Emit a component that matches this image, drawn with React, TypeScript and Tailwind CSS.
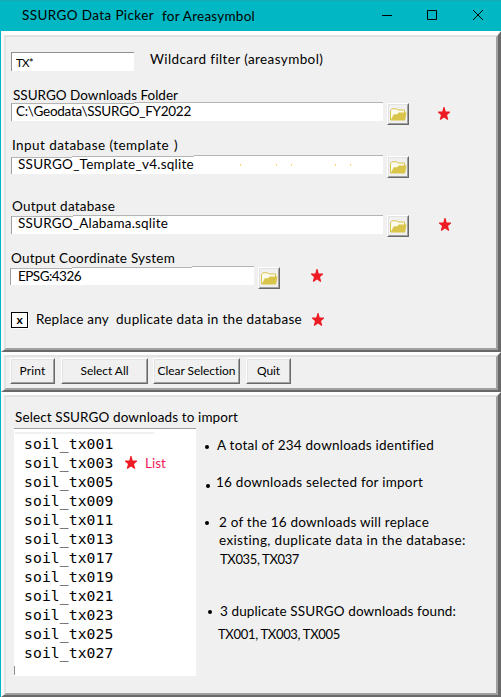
import { useLayoutEffect, useRef, useState } from "react";
import type { ReactNode } from "react";
import clsx from "clsx";

/** One line of label text, tracked so that it fills the given width. */
function Label({ children, width, className }: { children: string; width: number; className?: string }) {
  const ref = useRef<HTMLSpanElement>(null);
  const [spacing, setSpacing] = useState(0);
  useLayoutEffect(() => {
    if (!ref.current) return;
    const natural = ref.current.getBoundingClientRect().width;
    setSpacing((width - natural) / children.length);
  }, []);
  return (
    <div className={clsx("h-5 leading-5 whitespace-pre", className)}>
      <span ref={ref} style={{ letterSpacing: spacing }}>
        {children}
      </span>
    </div>
  );
}

function Star({ className }: { className?: string }) {
  return (
    <svg viewBox="0 0 12 13" className={clsx("h-[13px] w-3 shrink-0", className)} fill="#ed1c24">
      <path d="M5.5 0h1l1.2 4.6H12v1L9 8l1.2 4.2-.6.8L6 10.6 2.4 13l-.6-.8L3 8 0 5.6v-1h4.3z" />
    </svg>
  );
}

function FolderButton({ className }: { className?: string }) {
  return (
    <button
      className={clsx(
        "flex size-[22px] shrink-0 border border-t-white border-r-[#696969] border-b-[#696969] border-l-white",
        className,
      )}
    >
      <span className="flex size-5 items-start border border-t-[#e3e3e3] border-r-[#a0a0a0] border-b-[#a0a0a0] border-l-[#e3e3e3] pt-[3px] pl-px">
        <svg viewBox="0 0 17 13" className="h-[13px] w-[17px] shrink-0">
          <path d="M.5 12V2.5L2 .8h4.5L8 2h6.5v3" fill="#fdfbf0" stroke="#d9c54a" />
          <path d="M.5 12.5 3.8 6.3h3.4L8.6 4.6h7.9L15 12.5z" fill="#d9c54a" />
        </svg>
      </span>
    </button>
  );
}

function Field({ segments, children }: { segments: string[]; children: ReactNode }) {
  return (
    <div className="relative flex h-[19px] shrink-0">
      {segments.map((s, i) => (
        <div key={i} className={clsx("border-t border-[#b4b4b4] bg-white", i === 0 && "border-l border-l-[#a0a0a0]", s)} />
      ))}
      {children}
    </div>
  );
}

function Panel({ children, className }: { children: ReactNode; className: string }) {
  return (
    <section
      className={clsx(
        "shrink-0 border-r-[3px] border-b-2 border-l-[3px] border-t-white border-r-[#696969] border-b-[#696969] border-l-[#f8f8f8]",
        className,
      )}
    >
      <div className="h-full border-2 border-t-[#e3e3e3] border-r-[#a0a0a0] border-b-[#a0a0a0] border-l-[#e3e3e3] bg-[#f0f0f0]">
        {children}
      </div>
    </section>
  );
}

function PushButton({ label, text, className }: { label: string; text: number; className: string }) {
  return (
    <button
      className={clsx(
        "h-[26px] border border-t-white border-r-[#696969] border-b-[#696969] border-l-white text-[12px]",
        className,
      )}
    >
      <span className="flex h-6 justify-center border border-t-[#e3e3e3] border-r-[#a0a0a0] border-b-[#a0a0a0] border-l-[#e3e3e3] pt-px">
        <Label width={text}>{label}</Label>
      </span>
    </button>
  );
}

function Dot({ className }: { className: string }) {
  return <span className={clsx("size-1 shrink-0 rounded-full bg-black", className)} />;
}

const soils = ["001", "003", "005", "009", "011", "013", "017", "019", "021", "023", "025", "027"];

export default function App() {
  return (
    <main className="flex h-[697px] w-[501px] flex-col overflow-hidden bg-[#f0f0f0] font-['Lato',sans-serif] text-[13.5px] text-black">
      <header className="flex h-[31px] shrink-0 items-start border-t border-[#14a9b4] bg-[#00b7c3] pl-[22px]">
        <Label width={132} className="mt-1 w-[140px]">SSURGO Data Picker</Label>
        <Label width={93} className="mt-[5px] w-[220px]">for Areasymbol</Label>
        <svg viewBox="0 0 102 11" className="mt-2 h-[11px] w-[102px]" fill="none" stroke="#000">
          <path d="M0 6.5h10M45.5 1.5h9v9h-9zM91 1l10 10M101 1 91 11" />
        </svg>
      </header>

      <div className="flex grow flex-col border-l border-[#00b7c3]">
        <Panel className="h-[321px] border-t-4">
          <div className="flex h-12 items-start pt-3 pl-[5px]">
            <div className="mt-[3px] h-[19px] w-[123px] border-t border-l border-[#909090] bg-white pl-1 text-[11.5px]">
              <Label width={17}>TX*</Label>
            </div>
            <Label width={173} className="ml-4">Wildcard filter (areasymbol)</Label>
          </div>

          <Label width={165} className="ml-[7px]">SSURGO Downloads Folder</Label>
          <div className="-mt-[3px] flex h-[33px] items-start pl-[5px]">
            <Field segments={["mt-px w-[123px]", "w-[249px]"]}>
              <Label width={175} className="absolute top-[-1px] left-[5px]">C:\Geodata\SSURGO_FY2022</Label>
            </Field>
            <FolderButton className="mt-px ml-1" />
            <Star className="mt-[5px] ml-[29px]" />
          </div>

          <div className="flex pl-[6px]">
            <Label width={157} className="w-[162px]">Input database (template</Label>
            <Label width={4}>)</Label>
          </div>
          <div className="flex h-[41px] items-start pl-[5px]">
            <Field segments={["mt-0.5 w-[61px]", "mt-px w-[122px]", "w-[189px]"]}>
              <Label width={176} className="absolute top-[-1px] left-[7px]">SSURGO_Template_v4.sqlite</Label>
              <span className="absolute top-[9px] left-[229px] h-0.5 w-px bg-[#ffd280]" />
              <span className="absolute top-[9px] left-[265px] h-0.5 w-px bg-[#ffd280]" />
              <span className="absolute top-[9px] left-[280px] h-0.5 w-px bg-[#ffd280]" />
              <span className="absolute top-[9px] left-[324px] h-0.5 w-px bg-[#ffd280]" />
              <span className="absolute top-[9px] left-[339px] h-0.5 w-px bg-[#ffd280]" />
            </Field>
            <FolderButton className="mt-px ml-1" />
          </div>

          <Label width={103} className="ml-[6px]">Output database</Label>
          <div className="-mt-px flex h-[33px] items-start pl-[5px]">
            <Field segments={["mt-px w-[62px]", "w-[310px]"]}>
              <Label width={150} className="absolute top-[-2px] left-[7px]">SSURGO_Alabama.sqlite</Label>
            </Field>
            <FolderButton className="ml-1" />
            <Star className="mt-[3px] ml-[30px]" />
          </div>

          <Label width={164} className="ml-[5px]">Output Coordinate System</Label>
          <div className="-mt-0.5 flex h-[43px] items-start pl-1">
            <Field segments={["mt-0.5 w-[62px]", "mt-px w-[120px]", "w-[62px]"]}>
              <Label width={63} className="absolute top-0 left-[8px]">EPSG:4326</Label>
            </Field>
            <FolderButton className="mt-px ml-1" />
            <Star className="mt-[3px] ml-[31px]" />
          </div>

          <div className="flex items-start pl-[5px]">
            <div className="mt-[3px] flex h-4 w-[17px] justify-center border border-black bg-white text-[12px] font-bold shadow-[1px_1px_0_#fff]">
              <Label width={6} className="-mt-[3px]">x</Label>
            </div>
            <Label width={73} className="ml-2 w-20">Replace any</Label>
            <Label width={186}>duplicate data in the database</Label>
            <Star className="mt-1 ml-[10px]" />
          </div>
        </Panel>

        <Panel className="h-10 border-t-[3px]">
          <div className="flex pt-px pl-1">
            <PushButton label="Print" text={26} className="w-[45px]" />
            <PushButton label="Select All" text={48} className="ml-[6px] w-[87px]" />
            <PushButton label="Clear Selection" text={78} className="ml-[5px] w-[87px]" />
            <PushButton label="Quit" text={23} className="ml-[6px] w-[45px]" />
          </div>
        </Panel>

        <Panel className="h-[305px] border-t-[3px]">
          <Label width={223} className="mt-[10px] ml-[9px]">Select SSURGO downloads to import</Label>
          <div className="mt-px flex items-start pl-2">
            <div className="h-[248px] w-[182px] border-t border-[#a0a0a0] bg-white">
              <div className="mt-[3px] ml-px h-0.5 w-[139px] bg-[#f0f0f0]" />
              <ul className="pl-[10px] font-['DejaVu_Sans_Mono',monospace] text-[14.7px]">
                {soils.map((n) => (
                  <li key={n} className="flex h-[19px] items-start leading-[19px]">
                    <span className="w-[101px] tracking-[0.1px]">soil_tx{n}</span>
                    {n === "003" && (
                      <>
                        <Star className="mt-[3px]" />
                        <span className="ml-2 font-['Lato',sans-serif] text-[13.5px] text-[#ed1c5c]">
                          <Label width={21}>List</Label>
                        </span>
                      </>
                    )}
                  </li>
                ))}
              </ul>
              <div className="mt-1 h-[9px] w-px bg-[#909090]" />
            </div>

            <div className="flex flex-col pt-[7px]">
              <div className="flex h-[37px] items-start">
                <Dot className="mt-[10px] ml-[9px]" />
                <Label width={217} className="ml-2">A total of 234 downloads identified</Label>
              </div>
              <div className="flex h-10 items-start">
                <Dot className="mt-3 ml-[10px]" />
                <Label width={207} className="ml-[6px]">16 downloads selected for import</Label>
              </div>
              <div className="flex h-[18px] items-start">
                <Dot className="mt-[9px] ml-[9px]" />
                <Label width={210} className="ml-[10px]">2 of the 16 downloads will replace</Label>
              </div>
              <Label width={247} className="-mb-px ml-[23px]">existing, duplicate data in the database:</Label>
              <Label width={79} className="ml-[24px] text-[13px]">TX035, TX037</Label>
              <div className="mt-8 flex h-[23px] items-start">
                <Dot className="mt-[9px] ml-3" />
                <Label width={236} className="ml-2">3 duplicate SSURGO downloads found:</Label>
              </div>
              <Label width={122} className="ml-[22px] text-[13px]">TX001, TX003, TX005</Label>
            </div>
          </div>
        </Panel>
      </div>
    </main>
  );
}
